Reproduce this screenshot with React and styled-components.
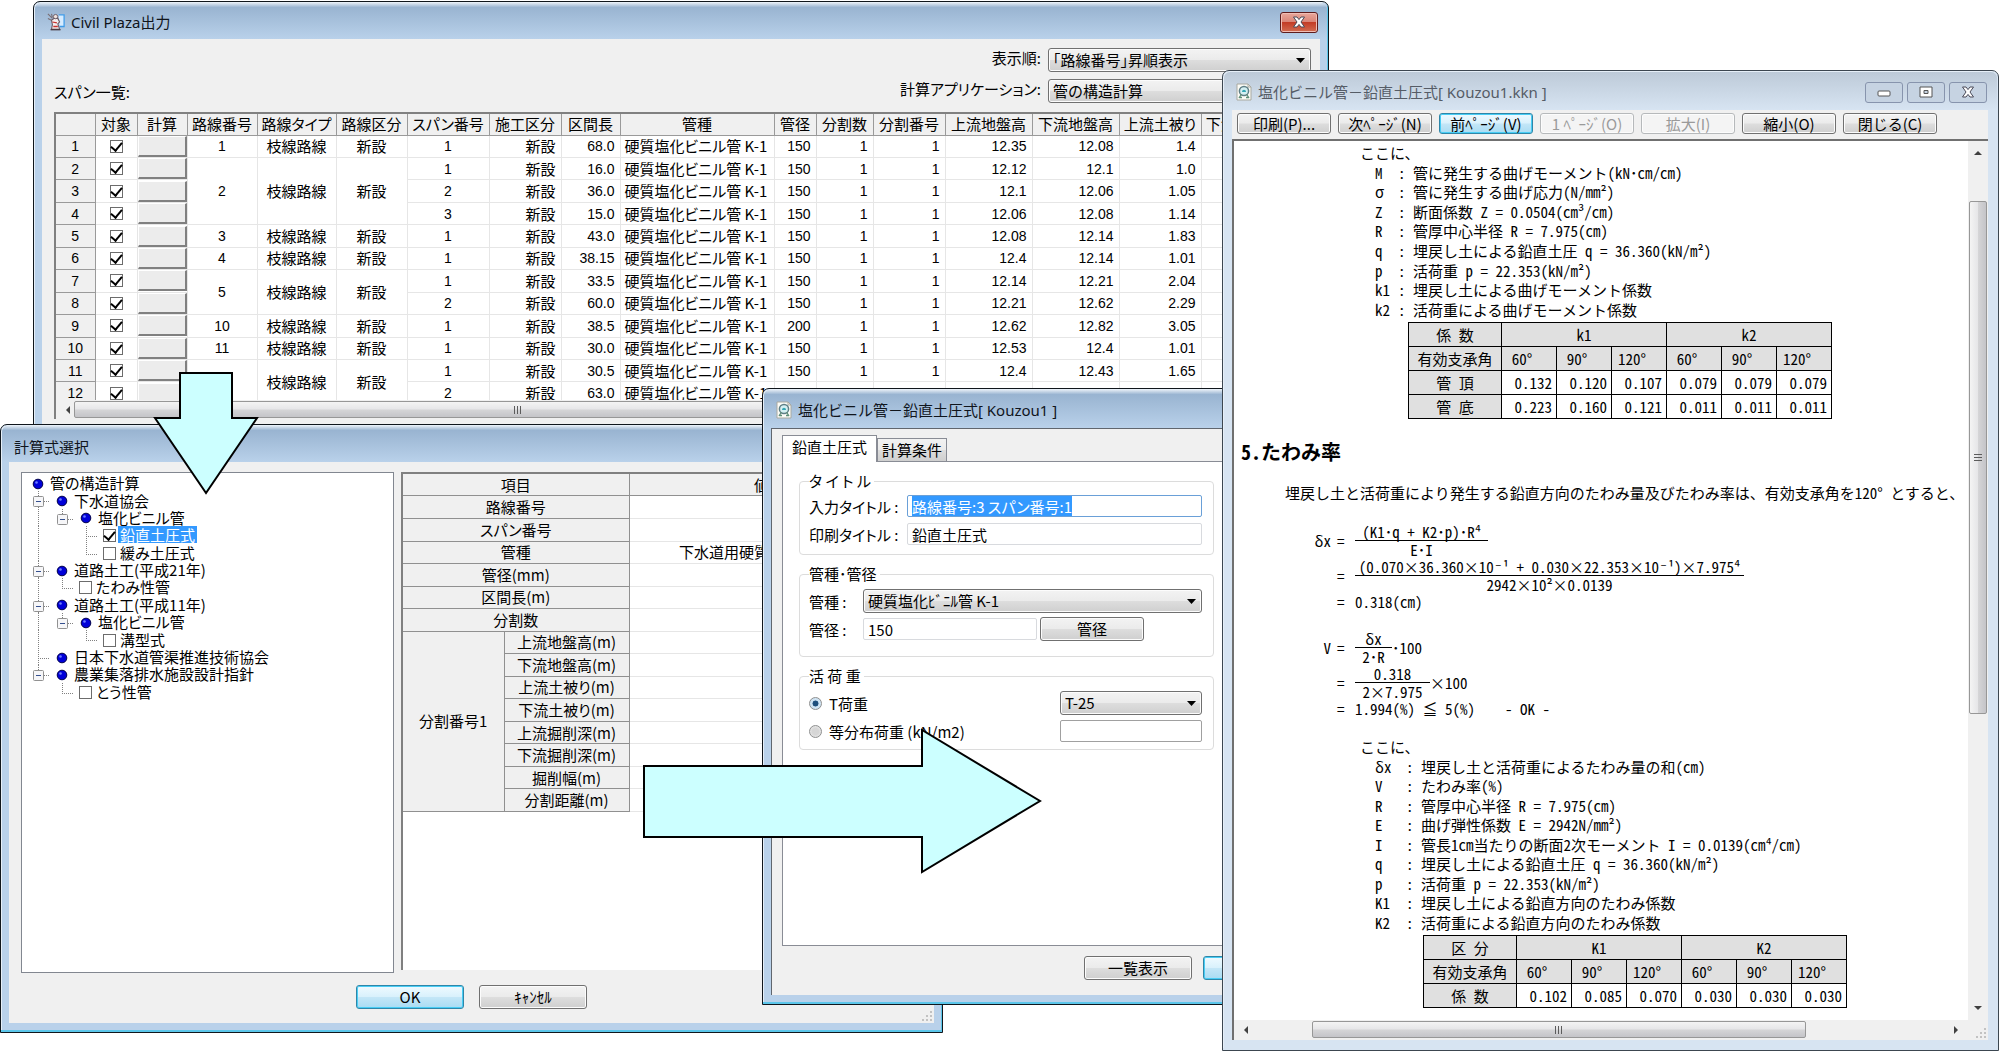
import React, { useEffect, useRef } from 'react'
import styled, { createGlobalStyle, css } from 'styled-components'

const uiFont = '"Noto Sans CJK JP", sans-serif';
const numberFont = '"Liberation Sans", sans-serif';
const titleFont = '"Noto Sans", "Noto Sans CJK JP", sans-serif';
const docFont = '"Noto Sans CJK JP", monospace';

const spans = [
    { len: '68.0', size: '150', up: '12.35', down: '12.08', cover: '1.4', no: '1', span: '1', rows: 1 },
    { len: '16.0', size: '150', up: '12.12', down: '12.1', cover: '1.0', no: '2', span: '1', rows: 3 },
    { len: '36.0', size: '150', up: '12.1', down: '12.06', cover: '1.05', span: '2' },
    { len: '15.0', size: '150', up: '12.06', down: '12.08', cover: '1.14', span: '3' },
    { len: '43.0', size: '150', up: '12.08', down: '12.14', cover: '1.83', no: '3', span: '1', rows: 1 },
    { len: '38.15', size: '150', up: '12.4', down: '12.14', cover: '1.01', no: '4', span: '1', rows: 1 },
    { len: '33.5', size: '150', up: '12.14', down: '12.21', cover: '2.04', no: '5', span: '1', rows: 2 },
    { len: '60.0', size: '150', up: '12.21', down: '12.62', cover: '2.29', span: '2' },
    { len: '38.5', size: '200', up: '12.62', down: '12.82', cover: '3.05', no: '10', span: '1', rows: 1 },
    { len: '30.0', size: '150', up: '12.53', down: '12.4', cover: '1.01', no: '11', span: '1', rows: 1 },
    { len: '30.5', size: '150', up: '12.4', down: '12.43', cover: '1.65', no: '', span: '1', rows: 2 },
    { len: '63.0', size: '', up: '', down: '', cover: '', span: '2' },
];

const spanColumns = [
    ['', 39], ['対象', 42], ['計算', 50], ['路線番号', 70], ['路線タイプ', 79], ['路線区分', 71],
    ['スパン番号', 82], ['施工区分', 72], ['区間長', 59], ['管種', 154], ['管径', 42], ['分割数', 57],
    ['分割番号', 72], ['上流地盤高', 87], ['下流地盤高', 87], ['上流土被り', 82], ['下流土被り', 82],
];

// guides : v = vertical, t = branch, l = last branch, _ = empty, b = box, e = last box
const tree = [
    { guides: '', text: '管の構造計算' },
    { guides: 'b', text: '下水道協会' },
    { guides: 've', text: '塩化ビニル管' },
    { guides: 'v_t', leaf: true, text: '鉛直土圧式', checked: true },
    { guides: 'v_l', leaf: true, text: '緩み土圧式' },
    { guides: 'b', text: '道路土工(平成21年)' },
    { guides: 'vl', leaf: true, text: 'たわみ性管' },
    { guides: 'b', text: '道路土工(平成11年)' },
    { guides: 've', text: '塩化ビニル管' },
    { guides: 'v_l', leaf: true, text: '溝型式' },
    { guides: 't', text: '日本下水道管渠推進技術協会' },
    { guides: 'e', text: '農業集落排水施設設計指針' },
    { guides: '_l', leaf: true, text: 'とう性管' },
];

const items = ['路線番号', 'スパン番号', '管種', '管径(mm)', '区間長(m)', '分割数'];
const subItems = ['上流地盤高(m)', '下流地盤高(m)', '上流土被り(m)', '下流土被り(m)', '上流掘削深(m)', '下流掘削深(m)', '掘削幅(m)', '分割距離(m)'];

const momentTerms = [
    ['M', '管に発生する曲げモーメント(kN･cm/cm)'],
    ['σ', '管に発生する曲げ応力(N/mm²)'],
    ['Z', '断面係数 Z = 0.0504(cm³/cm)'],
    ['R', '管厚中心半径 R = 7.975(cm)'],
    ['q', '埋戻し土による鉛直土圧 q = 36.360(kN/m²)'],
    ['p', '活荷重 p = 22.353(kN/m²)'],
    ['k1', '埋戻し土による曲げモーメント係数'],
    ['k2', '活荷重による曲げモーメント係数'],
];

const deflectionTerms = [
    ['δx', '埋戻し土と活荷重によるたわみ量の和(cm)'],
    ['V', 'たわみ率(%)'],
    ['R', '管厚中心半径 R = 7.975(cm)'],
    ['E', '曲げ弾性係数 E = 2942N/mm²)'],
    ['I', '管長1cm当たりの断面2次モーメント I = 0.0139(cm⁴/cm)'],
    ['q', '埋戻し土による鉛直土圧 q = 36.360(kN/m²)'],
    ['p', '活荷重 p = 22.353(kN/m²)'],
    ['K1', '埋戻し土による鉛直方向のたわみ係数'],
    ['K2', '活荷重による鉛直方向のたわみ係数'],
];

const angles = ['60°', '90°', '120°', '60°', '90°', '120°'];

function PlazaIcon() {
    return (
        <svg width="18" height="20" viewBox="0 0 20 20" aria-hidden="true">
            <path d="M13 2h6v13h-5" fill="#d7ecff" stroke="#3f9be8" strokeWidth="1.4" />
            <path d="M1 1l5 5M1 6l4 2M5 1l1 4" stroke="#7a6d72" strokeWidth="1.2" />
            <path d="M5 8l3-2 4 0 2 4-2 2 2 6H5l1-5z" fill="#f4eeee" stroke="#6b5b64" strokeWidth="1.2" />
            <circle cx="9.500" cy="4" r="2.400" fill="#f1e3de" stroke="#6b5b64" />
            <path d="M6 10l5 1M7 15h5" stroke="#c8322e" strokeWidth="1.4" />
            <path d="M4 18.500h11" stroke="#4b3c44" strokeWidth="1.6" />
        </svg>
    )
}

function PipeIcon() {
    return (
        <svg width="16" height="18" viewBox="0 0 16 18" aria-hidden="true">
            <path d="M1 1h11l3 3v13H1z" fill="#fbfbf6" stroke="#a9a9a0" />
            <path d="M12 1v3h3" fill="none" stroke="#a9a9a0" />
            <circle cx="8" cy="8" r="4.600" fill="#d5f0f2" stroke="#5f7f86" strokeWidth="1.500" />
            <path d="M6 9c0-3 4-3 4 0z" fill="#35a7b4" />
            <path d="M3 15l2.500-4M13 15l-2.500-4M3 14.500h3M10 14.500h3" stroke="#5f8f78" strokeWidth="1.300" fill="none" />
        </svg>
    )
}

function CloseGlyph() {
    return (
        <svg width="14" height="12" viewBox="0 0 14 12" aria-hidden="true">
            <path d="M1.500 1h3.500l2 2.600L9 1h3.500L9 6l3.500 5H9L7 8.400 5 11H1.500L5 6z" fill="#fff" stroke="#4a4a58" />
        </svg>
    )
}

function Dot() {
    return (
        <svg width="12" height="12" viewBox="0 0 12 12" aria-hidden="true">
            <circle cx="6" cy="6" r="4.800" fill="#0000d8" stroke="#000048" />
            <circle cx="4.500" cy="4.500" r="1.300" fill="#6d7dff" />
        </svg>
    )
}

function Guide({ kind }) {
    const line = { stroke: '#808080', strokeDasharray: '1 1', shapeRendering: 'crispEdges' };
    const isBox = kind === 'b' || kind === 'e';
    const full = kind === 'v' || kind === 't' || kind === 'b';
    const half = kind === 'l' || kind === 'e';
    return (
        <GuideCell aria-hidden="true">
            {(full || half) && <line x1="12.500" x2="12.500" y1="0" y2={full ? '100%' : '50%'} {...line} />}
            {kind !== 'v' && kind !== '_' && <line x1="12" x2="24" y1="10.500" y2="10.500" {...line} />}
            {isBox && <rect x="7.500" y="5.500" width="10" height="10" rx="1" fill="#f6f6f8" stroke="#919191" />}
            {isBox && <line x1="10" x2="15" y1="10.500" y2="10.500" stroke="#35508f" />}
        </GuideCell>
    )
}

function DropDown({ label, id, children }) {
    return (
        <SelectBox>
            <select id={id} aria-label={label} defaultValue={children}>
                <option>{children}</option>
            </select>
            <svg width="9" height="5" viewBox="0 0 9 5" aria-hidden="true"><path d="M0 0h9L4.500 5z" fill="#000" /></svg>
        </SelectBox>
    )
}

function ScrollBar({ vertical, before, thumb, after }) {
    return (
        <Scroll $vertical={vertical} aria-hidden="true">
            <svg width="10" height="10" viewBox="0 0 10 10">
                <path d={vertical ? 'M5 3l4 4H1z' : 'M3 5l4-4v8z'} fill="#404040" />
            </svg>
            <Track $grow={before} />
            <Thumb $grow={thumb} $vertical={vertical}><i /><i /><i /></Thumb>
            <Track $grow={after} />
            <svg width="10" height="10" viewBox="0 0 10 10">
                <path d={vertical ? 'M5 7l4-4H1z' : 'M7 5L3 1v8z'} fill="#404040" />
            </svg>
        </Scroll>
    )
}

function Grip() {
    return (
        <GripIcon width="12" height="12" viewBox="0 0 12 12" aria-hidden="true">
            <path d="M9 1h2v2H9zM9 5h2v2H9zM9 9h2v2H9zM5 5h2v2H5zM5 9h2v2H5zM1 9h2v2H1z" fill="#c2c2c2" />
        </GripIcon>
    )
}

function PlazaWindow() {
    return (
        <Window $x={33} $y={1} $w={1296} $h={440}>
            <TitleBar $h={36}>
                <PlazaIcon />
                <h1>Civil Plaza出力</h1>
                <CloseButton aria-label="閉じる"><CloseGlyph /></CloseButton>
            </TitleBar>
            <PlazaBody>
                <Options>
                    <label htmlFor="order">表示順:</label>
                    <DropDown id="order">｢路線番号｣昇順表示</DropDown>
                    <label htmlFor="app">計算アプリケーション:</label>
                    <DropDown id="app">管の構造計算</DropDown>
                </Options>
                <ListCaption>スパン一覧:</ListCaption>
                <SpanPanel>
                    <SpanClip>
                        <SpanTable>
                            <colgroup>
                                {spanColumns.map(([name, width]) => <col key={name} width={width} />)}
                            </colgroup>
                            <thead>
                                <tr>{spanColumns.map(([name]) => <th key={name}>{name}</th>)}</tr>
                            </thead>
                            <tbody>
                                {spans.map((row, i) => (
                                    <tr key={i}>
                                        <NumberHead scope="row">{i + 1}</NumberHead>
                                        <td><Check type="checkbox" defaultChecked aria-label={`対象 ${i + 1}`} /></td>
                                        <td><CalcButton aria-label={`計算 ${i + 1}`} /></td>
                                        {row.rows && (
                                            <>
                                                <Num rowSpan={row.rows}>{row.no}</Num>
                                                <td rowSpan={row.rows}>枝線路線</td>
                                                <td rowSpan={row.rows}>新設</td>
                                            </>
                                        )}
                                        <Num>{row.span}</Num>
                                        <Right>新設</Right>
                                        <RightNum>{row.len}</RightNum>
                                        <Left>硬質塩化ビニル管 K-1</Left>
                                        <RightNum>{row.size}</RightNum>
                                        <RightNum>{row.size && 1}</RightNum>
                                        <RightNum>{row.size && 1}</RightNum>
                                        <RightNum>{row.up}</RightNum>
                                        <RightNum>{row.down}</RightNum>
                                        <RightNum>{row.cover}</RightNum>
                                        <td />
                                    </tr>
                                ))}
                            </tbody>
                        </SpanTable>
                    </SpanClip>
                    <ScrollBar before={0} thumb={880} after={330} />
                </SpanPanel>
            </PlazaBody>
        </Window>
    )
}

function FormulaWindow() {
    return (
        <Window $x={0} $y={424} $w={943} $h={609}>
            <TitleBar $h={36} $drop>
                <h1>計算式選択</h1>
            </TitleBar>
            <FormulaBody>
                <Tree>
                    {tree.map((node, i) => (
                        <li key={i}>
                            {node.guides.split('').map((kind, g) => <Guide key={g} kind={kind} />)}
                            {node.leaf ? (
                                <TreeLabel $selected={node.checked}>
                                    <Check type="checkbox" defaultChecked={node.checked} />
                                    <span>{node.text}</span>
                                </TreeLabel>
                            ) : (
                                <>
                                    <NodeCell><Dot /></NodeCell>
                                    <span>{node.text}</span>
                                </>
                            )}
                        </li>
                    ))}
                </Tree>
                <ItemPanel>
                    <ItemTable>
                        <colgroup><col width="101" /><col width="125" /><col width="265" /></colgroup>
                        <tbody>
                            <tr><th colSpan={2}>項目</th><th>値</th></tr>
                            {items.map((name) => (
                                <tr key={name}>
                                    <th colSpan={2}>{name}</th>
                                    <td>{name === '管種' ? '下水道用硬質塩化ﾋﾞﾆﾙ管' : ''}</td>
                                </tr>
                            ))}
                            {subItems.map((name, i) => (
                                <tr key={name}>
                                    {i === 0 && <th rowSpan={8}>分割番号1</th>}
                                    <th>{name}</th>
                                    <td />
                                </tr>
                            ))}
                        </tbody>
                    </ItemTable>
                </ItemPanel>
                <FormulaButtons>
                    <Button $w={108} $primary>OK</Button>
                    <Button $w={108}>ｷｬﾝｾﾙ</Button>
                </FormulaButtons>
                <Grip />
            </FormulaBody>
        </Window>
    )
}

function InputWindow() {
    const titleRef = useRef(null);

    useEffect(() => {
        titleRef.current.focus({ preventScroll: true });
        titleRef.current.select();
    }, [])

    return (
        <Window $x={762} $y={388} $w={560} $h={617}>
            <TitleBar $h={38}>
                <PipeIcon />
                <h1>塩化ビニル管－鉛直土圧式[ Kouzou1 ]</h1>
            </TitleBar>
            <InputBody>
                <Tabs role="tablist">
                    <Tab role="tab" aria-selected="true" $active>鉛直土圧式</Tab>
                    <Tab role="tab" aria-selected="false">計算条件</Tab>
                </Tabs>
                <TabPanel>
                    <Group>
                        <legend>タ イ ト ル</legend>
                        <Field>
                            <FieldLabel htmlFor="inTitle" $w={98}>入力タイトル :</FieldLabel>
                            <TextInput id="inTitle" ref={titleRef} $focused defaultValue="路線番号:3 スパン番号:1" />
                        </Field>
                        <Field>
                            <FieldLabel htmlFor="prTitle" $w={98}>印刷タイトル :</FieldLabel>
                            <TextInput id="prTitle" defaultValue="鉛直土圧式" />
                        </Field>
                    </Group>
                    <Group $tall>
                        <legend>管種･管径</legend>
                        <Field>
                            <FieldLabel htmlFor="kind" $w={54}>管種 :</FieldLabel>
                            <DropDown id="kind">硬質塩化ﾋﾞﾆﾙ管 K-1</DropDown>
                        </Field>
                        <Field>
                            <FieldLabel htmlFor="diameter" $w={54}>管径 :</FieldLabel>
                            <TextInput id="diameter" defaultValue="150" />
                            <DiameterButton>管径</DiameterButton>
                        </Field>
                    </Group>
                    <Group>
                        <legend>活 荷 重</legend>
                        <Field>
                            <RadioLabel><input type="radio" name="load" defaultChecked />T荷重</RadioLabel>
                            <LoadValue><DropDown label="T荷重">T-25</DropDown></LoadValue>
                        </Field>
                        <Field>
                            <RadioLabel><input type="radio" name="load" />等分布荷重 (kN/m2)</RadioLabel>
                            <LoadValue><TextInput $dark aria-label="等分布荷重" /></LoadValue>
                        </Field>
                    </Group>
                </TabPanel>
                <InputButtons>
                    <Button $w={108}>一覧表示</Button>
                    <Button $w={108} $primary aria-label="確定" />
                </InputButtons>
            </InputBody>
        </Window>
    )
}

function Terms({ list, wide }) {
    return (
        <TermList $tall={wide}>
            <p>ここに、</p>
            {list.map(([sign, text]) => (
                <Term key={sign} $wide={wide}>
                    <dt>{sign}</dt>
                    <span>:</span>
                    <dd>{text}</dd>
                </Term>
            ))}
        </TermList>
    )
}

function CoefTable({ head, names, rows, indent }) {
    return (
        <Coef $indent={indent}>
            <colgroup>
                <col width="93" />
                {angles.map((a, i) => <col key={i} width="55" />)}
            </colgroup>
            <tbody>
                <tr><th>{head}</th><th colSpan={3}>{names[0]}</th><th colSpan={3}>{names[1]}</th></tr>
                <tr><th>有効支承角</th>{angles.map((a, i) => <Angle key={i}>{a}</Angle>)}</tr>
                {rows.map(([name, ...values]) => (
                    <tr key={name}>
                        <th>{name}</th>
                        {values.map((v, i) => <td key={i}>{v}</td>)}
                    </tr>
                ))}
            </tbody>
        </Coef>
    )
}

function PreviewWindow() {
    return (
        <Window $x={1222} $y={70} $w={777} $h={981} $inactive>
            <TitleBar $h={38} $inactive>
                <PipeIcon />
                <h1>塩化ビニル管－鉛直土圧式[ Kouzou1.kkn ]</h1>
                <CaptionButtons>
                    <button aria-label="最小化">
                        <svg width="14" height="12" viewBox="0 0 14 12"><rect x="1" y="5" width="12" height="5" rx="1" fill="#fff" stroke="#555" /></svg>
                    </button>
                    <button aria-label="元に戻す">
                        <svg width="14" height="12" viewBox="0 0 14 12">
                            <path d="M1 1h12v10H1zM5 4.500v3h4v-3z" fill="#fff" fillRule="evenodd" stroke="#555" />
                        </svg>
                    </button>
                    <button aria-label="閉じる"><CloseGlyph /></button>
                </CaptionButtons>
            </TitleBar>
            <PreviewBody>
                <Toolbar>
                    <Button $w={94}>印刷(P)...</Button>
                    <Button $w={94}>次ﾍﾟｰｼﾞ(N)</Button>
                    <Button $w={94} $primary>前ﾍﾟｰｼﾞ(V)</Button>
                    <Button $w={94} disabled>1 ﾍﾟｰｼﾞ(O)</Button>
                    <Button $w={94} disabled>拡大(I)</Button>
                    <Button $w={94}>縮小(O)</Button>
                    <Button $w={94}>閉じる(C)</Button>
                </Toolbar>
                <Viewer>
                    <Page>
                        <Terms list={momentTerms} />
                        <CoefTable
                            indent={174}
                            head="係　数"
                            names={['k1', 'k2']}
                            rows={[
                                ['管　頂', '0.132', '0.120', '0.107', '0.079', '0.079', '0.079'],
                                ['管　底', '0.223', '0.160', '0.121', '0.011', '0.011', '0.011'],
                            ]}
                        />
                        <h2>5.たわみ率</h2>
                        <Sentence>埋戻し土と活荷重により発生する鉛直方向のたわみ量及びたわみ率は、有効支承角を120° とすると、</Sentence>
                        <Equation>
                            <b>δx</b><i>=</i>
                            <Fraction $w={133}><span>(K1･q + K2･p)･R⁴</span><span>E･I</span></Fraction>
                        </Equation>
                        <Equation>
                            <b /><i>=</i>
                            <Fraction $w={389}>
                                <span>(0.070×36.360×10⁻¹ + 0.030×22.353×10⁻¹)×7.975⁴</span>
                                <span>2942×10²×0.0139</span>
                            </Fraction>
                        </Equation>
                        <Equation $plain><b /><i>=</i><span>0.318(cm)</span></Equation>
                        <Equation $first>
                            <b>V</b><i>=</i>
                            <Fraction $w={37}><span>δx</span><span>2･R</span></Fraction>
                            <span>･100</span>
                        </Equation>
                        <Equation>
                            <b /><i>=</i>
                            <Fraction $w={75}><span>0.318</span><span>2×7.975</span></Fraction>
                            <span>×100</span>
                        </Equation>
                        <Equation $plain><b /><i>=</i><span>1.994(%) ≦ 5(%)    - OK -</span></Equation>
                        <Gap />
                        <Terms list={deflectionTerms} wide />
                        <CoefTable
                            indent={189}
                            head="区　分"
                            names={['K1', 'K2']}
                            rows={[['係　数', '0.102', '0.085', '0.070', '0.030', '0.030', '0.030']]}
                        />
                    </Page>
                    <ScrollBar vertical before={42} thumb={510} after={288} />
                    <ScrollBar before={60} thumb={491} after={144} />
                    <Corner><Grip /></Corner>
                </Viewer>
            </PreviewBody>
        </Window>
    )
}

export default function App() {
    return (
        <Desktop>
            <GlobalStyle />
            <PlazaWindow />
            <FormulaWindow />
            <InputWindow />
            <PreviewWindow />
            <Arrow $x={153} $y={371} width="106" height="126" viewBox="0 0 106 126" aria-hidden="true">
                <path d="M27 2h52v45h25L53 122 2 47h25z" />
            </Arrow>
            <Arrow $x={642} $y={726} width="402" height="150" viewBox="0 0 402 150" aria-hidden="true">
                <path d="M2 40h278V4l118 71-118 71v-35H2z" />
            </Arrow>
        </Desktop>
    )
}

const GlobalStyle = createGlobalStyle`
    * {
        box-sizing: border-box;
    }
    body {
        margin: 0;
        background: #fff;
    }
    body, button, input, select {
        font-family: ${uiFont};
        font-size: 15px;
        color: #000;
    }
    body, input {
        font-feature-settings: "palt";
    }
    h1, h2, p, ul, dl, dd {
        margin: 0;
        padding: 0;
    }
`;

const Desktop = styled.main`
    position: relative;
    min-height: 100vh;
    overflow: hidden;
`;

const Window = styled.section`
    position: absolute;
    left: ${(p) => p.$x}px;
    top: ${(p) => p.$y}px;
    width: ${(p) => p.$w}px;
    height: ${(p) => p.$h}px;
    display: flex;
    flex-direction: column;
    padding: ${(p) => (p.$inactive ? '0 10px 10px 9px' : '0 8px 9px')};
    border: 1px solid ${(p) => (p.$inactive ? '#3c4650' : '#10161c')};
    border-radius: 7px 7px 0 0;
    background: ${(p) => (p.$inactive ? '#d7e4f2' : '#b9d1ea')};
    box-shadow: inset -1px -2px 0 ${(p) => (p.$inactive ? '#d7e4f2' : '#5bc6ea')}, inset 1px 1px 0 #e6eff8;
`;

const TitleBar = styled.header`
    display: flex;
    flex: none;
    align-items: center;
    gap: 6px;
    height: ${(p) => p.$h}px;
    margin: ${(p) => (p.$inactive ? '1px -9px 0 -8px' : '1px -7px 0')};
    padding: ${(p) => (p.$drop ? 6 : 2)}px 9px 0 12px;
    border-radius: 6px 6px 0 0;
    background: linear-gradient(${(p) => (p.$inactive ? '#bdcad8, #d7e4f2' : '#dfe8f2, #99b4d1 12%, #b9d1ea')});

    h1 {
        flex: 1;
        font: 400 15px/20px ${titleFont};
        color: ${(p) => (p.$inactive ? '#555c66' : '#10151c')};
    }
`;

const CloseButton = styled.button`
    display: flex;
    align-items: center;
    justify-content: center;
    width: 38px;
    height: 21px;
    padding: 0;
    border: 1px solid #5e1c1c;
    border-radius: 3px;
    background: linear-gradient(#e9a79b, #d98476 48%, #c33c26 50%, #d26d52);
    box-shadow: inset 0 0 0 1px #f0bdb4;
`;

const CaptionButtons = styled.div`
    display: flex;
    gap: 4px;
    margin-right: 1px;

    button {
        display: flex;
        align-items: center;
        justify-content: center;
        width: 38px;
        height: 21px;
        padding: 0;
        border: 1px solid #8794ad;
        border-radius: 3px;
        background: #c6d3e2;
    }
`;

const buttonFace = css`
    border: 1px solid #707070;
    border-radius: 3px;
    background: linear-gradient(#f3f3f3, #ebebeb 48%, #dddddd 52%, #cfcfcf);
    box-shadow: inset 0 0 0 1px #fcfcfc;
`;

const Button = styled.button`
    ${buttonFace}
    width: ${(p) => p.$w}px;
    height: 24px;
    padding: 0;
    line-height: 20px;
    ${(p) => p.$primary && css`
        border-color: #2f86a8;
        background: linear-gradient(#effaff, #d9f1fc 48%, #c3e6f7 52%, #a9dcf3);
        box-shadow: inset 0 0 0 1px #48cdf5;
    `}
    &:disabled {
        color: #9a9a9a;
        border-color: #b6b9bb;
        background: #f4f4f4;
    }
`;

const SelectBox = styled.div`
    position: relative;
    flex: 1;
    height: 24px;

    select {
        ${buttonFace}
        display: block;
        appearance: none;
        width: 100%;
        height: 100%;
        padding: 0 24px 0 4px;
        line-height: 20px;
    }
    svg {
        position: absolute;
        right: 6px;
        top: 10px;
        pointer-events: none;
    }
`;

const Check = styled.input`
    appearance: none;
    display: grid;
    place-items: center;
    width: 13px;
    height: 13px;
    margin: 0 auto;
    border: 1px solid #6c6c6c;
    background: #fff;

    &:checked::after {
        content: "";
        width: 5px;
        height: 9px;
        margin-top: -2px;
        border: solid #000;
        border-width: 0 2px 2px 0;
        transform: rotate(40deg);
    }
`;

const Scroll = styled.div`
    display: flex;
    flex-direction: ${(p) => (p.$vertical ? 'column' : 'row')};
    align-items: center;
    padding: ${(p) => (p.$vertical ? '7px 0' : '0 7px')};
    background: #f0f0f0;
    ${(p) => (p.$vertical ? 'width: 20px;' : 'height: 19px;')}
`;

const Track = styled.span`
    flex: ${(p) => p.$grow} 1 0;
`;

const Thumb = styled.span`
    flex: ${(p) => p.$grow} 1 0;
    align-self: stretch;
    display: flex;
    flex-direction: ${(p) => (p.$vertical ? 'column' : 'row')};
    align-items: center;
    justify-content: center;
    gap: 2px;
    margin: 1px;
    border: 1px solid #979797;
    border-radius: 2px;
    background: linear-gradient(${(p) => (p.$vertical ? '90deg' : '180deg')}, #f4f4f4, #e6e6e8 48%, #d5d5d7 52%, #c4c4c8);

    i {
        width: ${(p) => (p.$vertical ? 8 : 1)}px;
        height: ${(p) => (p.$vertical ? 1 : 8)}px;
        background: #5c5c5c;
    }
`;

const GripIcon = styled.svg`
    display: block;
    margin: auto 1px 1px auto;
`;

const PlazaBody = styled.div`
    flex: 1;
    display: flex;
    flex-direction: column;
    padding: 9px 9px 0 12px;
    background: #f0f0f0;
`;

const Options = styled.div`
    align-self: flex-end;
    display: grid;
    grid-template-columns: auto 263px;
    gap: 7px;
    line-height: 20px;
    text-align: right;
`;

const ListCaption = styled.p`
    margin-top: -21px;
    line-height: 20px;
`;

const SpanPanel = styled.div`
    margin-top: 10px;
    border-top: 2px solid #808080;
    border-left: 2px solid #808080;
    background: #fff;
`;

const SpanClip = styled.div`
    height: 286px;
    overflow: hidden;
`;

const SpanTable = styled.table`
    table-layout: fixed;
    width: 1227px;
    height: 291px;
    border-collapse: collapse;
    line-height: 18px;
    white-space: nowrap;

    thead tr {
        height: 21px;
    }
    th, td {
        padding: 0;
        font-weight: 400;
        text-align: center;
    }
    td {
        border: solid #e6e6e6;
        border-width: 0 1px 1px 0;
    }
    th {
        border: solid #9a9a9a;
        border-width: 0 1px 1px 0;
        background: #f0f0f0;
    }
`;

const numberText = css`
    font-family: ${numberFont};
    font-size: 14px;
`;

const NumberHead = styled.th`
    ${numberText}
`;

const Num = styled.td`
    ${numberText}
`;

const Right = styled.td`
    && {
        padding-right: 5px;
        text-align: right;
    }
`;

const RightNum = styled(Right)`
    ${numberText}
`;

const Left = styled.td`
    && {
        padding-left: 4px;
        text-align: left;
    }
`;

const CalcButton = styled.button`
    display: block;
    width: 100%;
    height: 21px;
    padding: 0;
    border: solid;
    border-width: 1px 2px 2px 1px;
    border-color: #fff #808080 #808080 #fff;
    background: #ececec;
`;

const FormulaBody = styled.div`
    flex: 1;
    display: grid;
    grid-template: 501px 1fr / 373px 1fr;
    column-gap: 7px;
    padding: 10px 0 0 12px;
    background: #f0f0f0;
`;

const Tree = styled.ul`
    display: grid;
    grid-template-rows: repeat(13, 1fr) 271px;
    padding: 1px 4px;
    border: 1px solid #828790;
    background: #fff;

    li {
        display: flex;
        align-items: center;
        min-height: 0;
        line-height: 17px;
        white-space: nowrap;
    }
`;

const GuideCell = styled.svg`
    flex: none;
    width: 24px;
    height: 100%;
`;

const NodeCell = styled.span`
    flex: none;
    display: flex;
    justify-content: center;
    width: 24px;
    padding-top: 2px;
`;

const TreeLabel = styled.label`
    display: flex;
    align-items: center;

    input {
        margin: 2px 4px 0 5px;
    }
    span {
        padding: 0 2px;
        margin-left: -2px;
        ${(p) => p.$selected && 'background: #3399ff; color: #fff;'}
    }
`;

const ItemPanel = styled.div`
    height: 498px;
    border-top: 2px solid #808080;
    border-left: 2px solid #808080;
    background: #fff;
`;

const ItemTable = styled.table`
    table-layout: fixed;
    width: 491px;
    height: 338px;
    border-collapse: collapse;
    line-height: 18px;

    th, td {
        padding: 0;
        font-weight: 400;
        text-align: center;
        border: solid #e6e6e6;
        border-width: 0 1px 1px 0;
    }
    th {
        border-color: #909090;
        background: #f0f0f0;
    }
`;

const FormulaButtons = styled.div`
    grid-column: 1 / 3;
    grid-row: 2;
    display: flex;
    justify-content: center;
    gap: 15px;
    height: 38px;
    padding-top: 12px;
    margin-right: 12px;

    & + svg {
        grid-column: 2;
        grid-row: 2;
    }
`;

const InputBody = styled.div`
    flex: 1;
    display: flex;
    flex-direction: column;
    padding: 6px 0 0 10px;
    border-top: 1px solid #60666e;
    border-left: 1px solid #60666e;
    background: #f0f0f0;
`;

const Tabs = styled.div`
    display: flex;
    align-items: flex-end;
    height: 26px;
`;

const Tab = styled.button`
    height: ${(p) => (p.$active ? 27 : 23)}px;
    width: ${(p) => (p.$active ? 95 : 70)}px;
    margin-bottom: ${(p) => (p.$active ? -1 : 0)}px;
    padding: 0 0 ${(p) => (p.$active ? 5 : 1)}px;
    border: 1px solid #898c95;
    border-bottom: 0;
    line-height: 20px;
    background: ${(p) => (p.$active ? '#fff' : 'linear-gradient(#f2f2f2, #ebebeb 48%, #dddddd 52%, #cfcfcf)')};
    position: relative;
    z-index: ${(p) => (p.$active ? 1 : 0)};
`;

const TabPanel = styled.div`
    flex: none;
    height: 485px;
    padding: 9px 0 0 16px;
    border: solid #898c95;
    border-width: 1px 0 1px 1px;
    background: #fff;
`;

const Group = styled.fieldset`
    display: flex;
    flex-direction: column;
    gap: 4px;
    width: 415px;
    height: ${(p) => (p.$tall ? 93 : 84)}px;
    margin: 0 0 9px;
    padding: 5px 11px 0 9px;
    border: 1px solid #dcdcdc;
    border-radius: 4px;

    &:first-child {
        padding-top: 3px;
    }
    legend {
        padding: 0 3px 0 0;
        line-height: 20px;
    }
`;

const Field = styled.div`
    display: flex;
    align-items: center;
    height: 24px;
`;

const FieldLabel = styled.label`
    flex: none;
    width: ${(p) => p.$w}px;
`;

const TextInput = styled.input`
    flex: 1;
    min-width: 0;
    width: 100%;
    height: 22px;
    padding: 0 4px;
    border: 1px solid ${(p) => (p.$focused ? '#6aa0d8' : p.$dark ? '#a0a0a0' : '#d8dade')};
    border-radius: 2px;
    outline: 0;
    background: #fff;

    &::selection {
        background: #3399ff;
        color: #fff;
    }
`;

const DiameterButton = styled(Button)`
    width: 104px;
    margin: 0 58px 0 3px;
`;

const RadioLabel = styled.label`
    flex: 1;
    display: flex;
    align-items: center;
    gap: 7px;

    input {
        width: 13px;
        height: 13px;
        margin: 0;
        appearance: none;
        border: 1px solid #8e8f8f;
        border-radius: 50%;
        background: radial-gradient(#d6d6d6 40%, #f4f4f4);
    }
    input:checked {
        background: radial-gradient(#1d4e7c 35%, #cfe3f3 42%);
    }
`;

const LoadValue = styled.div`
    display: flex;
    width: 142px;
`;

const InputButtons = styled.div`
    display: flex;
    gap: 11px;
    padding: 10px 0 0 302px;
`;

const PreviewBody = styled.div`
    flex: 1;
    display: flex;
    flex-direction: column;
    min-height: 0;
    background: #f0f0f0;
`;

const Toolbar = styled.nav`
    display: flex;
    gap: 7px;
    padding: 3px 5px 5px;

    button {
        height: 21px;
        line-height: 17px;
    }
`;

const Viewer = styled.div`
    flex: 1;
    display: grid;
    grid-template: 1fr 20px / 1fr 20px;
    min-height: 0;
    border-top: 2px solid #707070;
    border-left: 2px solid #707070;
`;

const Corner = styled.div`
    display: flex;
`;

const Page = styled.article`
    min-width: 0;
    padding-top: 2px;
    overflow: hidden;
    background: #fff;
    font-family: ${docFont};
    font-feature-settings: "hwid";
    white-space: pre;

    h2 {
        margin: 21px 0 19px 7px;
        font-size: 20px;
        line-height: 24px;
    }
`;

const TermList = styled.dl`
    display: grid;
    grid-auto-rows: 1fr;
    align-items: center;
    height: ${(p) => (p.$tall ? 195 : 176)}px;
    padding-left: 126px;
    line-height: 19px;
`;

const Term = styled.div`
    display: grid;
    grid-template-columns: ${(p) => (p.$wide ? 31 : 23)}px 15px auto;
    padding-left: 15px;
`;

const Coef = styled.table`
    table-layout: fixed;
    width: 424px;
    margin: 3px 0 0 ${(p) => p.$indent}px;
    border-collapse: collapse;
    line-height: 20px;

    tr {
        height: 24px;
    }
    th, td {
        padding: 0;
        border: 1px solid #000;
        font-weight: 400;
    }
    th {
        background: #e0e0e0;
    }
    td {
        padding-right: 4px;
        text-align: right;
    }
`;

const Angle = styled.th`
    && {
        padding-right: 14px;
    }
`;

const Sentence = styled.p`
    margin-bottom: 20px;
    padding-left: 51px;
    line-height: 20px;
`;

const Equation = styled.div`
    display: flex;
    align-items: center;
    height: ${(p) => (p.$plain ? 17 : 35)}px;
    margin-top: ${(p) => (p.$first ? 20 : 0)}px;
    line-height: 17px;

    b {
        width: 97px;
        font-weight: 400;
        text-align: right;
    }
    i {
        width: 24px;
        padding-left: 6px;
        font-style: normal;
    }
`;

const Fraction = styled.div`
    display: flex;
    flex-direction: column;
    width: ${(p) => p.$w}px;
    text-align: center;

    span + span {
        border-top: 1px solid #000;
    }
`;

const Gap = styled.div`
    height: 20px;
`;

const Arrow = styled.svg`
    position: absolute;
    left: ${(p) => p.$x}px;
    top: ${(p) => p.$y}px;

    path {
        fill: #ccffff;
        stroke: #000;
        stroke-width: 2px;
    }
`;
